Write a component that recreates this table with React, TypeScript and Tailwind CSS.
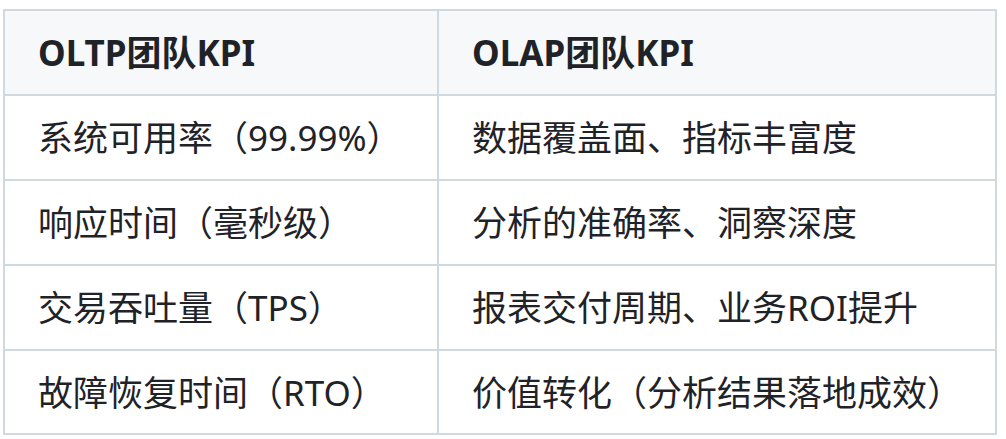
import React from "react";

const rows: [string, string][] = [
  ["系统可用率（99.99%）", "数据覆盖面、指标丰富度"],
  ["响应时间（毫秒级）", "分析的准确率、洞察深度"],
  ["交易吞吐量（TPS）", "报表交付周期、业务ROI提升"],
  ["故障恢复时间（RTO）", "价值转化（分析结果落地成效）"],
];

export default function App() {
  return (
    <div className="w-[1006px] h-[439px] bg-white pt-[9px] pl-[3px] font-['Noto_Sans','Noto_Sans_CJK_SC',sans-serif] text-[#1f2328] text-[35px] leading-none">
      <div className="w-[994px] border-2 border-[#d1d9e0]">
        <div className="flex h-[85px] bg-[#f6f8fa] border-b-2 border-[#d1d9e0] font-bold">
          <div className="w-[434px] border-r-2 border-[#d1d9e0] flex items-center px-[33px]">
            OLTP团队KPI
          </div>
          <div className="flex-1 flex items-center px-[33px]">OLAP团队KPI</div>
        </div>
        {rows.map(([a, b], i) => (
          <div
            key={i}
            className={
              i < rows.length - 1
                ? "flex h-[85px] border-b-2 border-[#d1d9e0]"
                : "flex h-[82px]"
            }
          >
            <div className="w-[434px] border-r-2 border-[#d1d9e0] flex items-center px-[33px]">
              {a}
            </div>
            <div className="flex-1 flex items-center px-[33px]">{b}</div>
          </div>
        ))}
      </div>
    </div>
  );
}
